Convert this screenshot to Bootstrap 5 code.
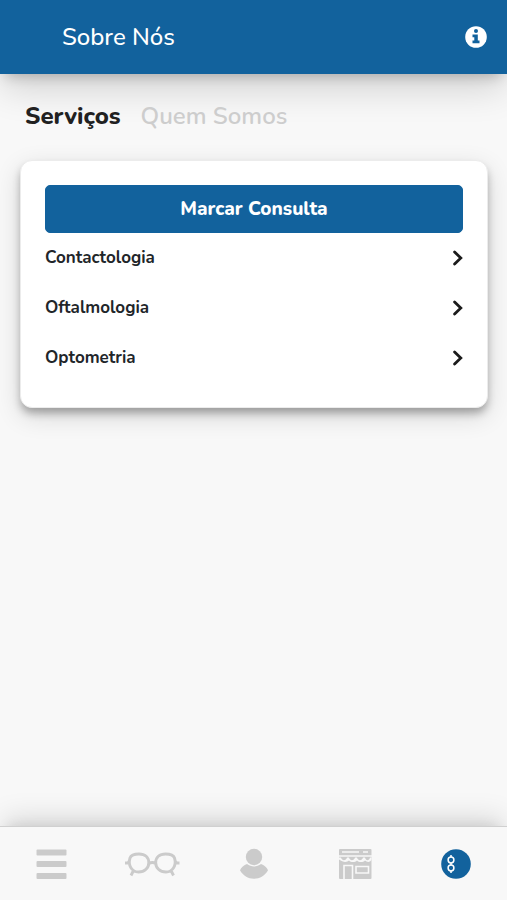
<!DOCTYPE html>
<html lang="pt">
<head>
<meta charset="utf-8">
<meta name="viewport" content="width=device-width, initial-scale=1">
<title>Sobre Nós</title>
<link href="https://cdn.jsdelivr.net/npm/bootstrap@5.3.0/dist/css/bootstrap.min.css" rel="stylesheet">
<style>
:root { --brand: #12629d; --muted-icon: #cbcbcb; }
body { font-family: Nunito, Lato, "Noto Sans", sans-serif; background: #f8f8f8; color: #212529; }
.app-header { background: var(--brand); height: 74px; padding: 0 20px 0 62px; box-shadow: 0 8px 12px -6px rgba(0,0,0,.22), 0 16px 36px -2px rgba(0,0,0,.16); }
.app-title { font-size: 24px; line-height: 32px; font-weight: 500; }
.icon-btn { line-height: 0; }
.tab-bar { padding: 24px 25px 0; gap: 20px; }
.tab-btn { font-size: 24px; line-height: 36px; font-weight: 600; color: #cdcdcd; }
.tab-btn.active { font-weight: 800; color: #212121; }
.service-card { margin: 26px 19px 0 20px; padding: 24px; border-radius: 12px; border: 1px solid #ececec; box-shadow: 0 6px 8px -1px rgba(0,0,0,.3), 0 8px 26px rgba(0,0,0,.14); }
.book-btn { --bs-btn-bg: var(--brand); --bs-btn-border-color: var(--brand); --bs-btn-hover-bg: #0e5386; font-size: 19px; line-height: 30px; font-weight: 800; padding: 8px 12px; border-radius: 5px; }
.service-row { height: 50px; font-size: 17px; line-height: 24px; font-weight: 700; color: #212529; }
.bottom-nav { height: 74px; background: #f8f8f8; border-top: 1px solid #d0d0d0; box-shadow: 0 -8px 12px -8px rgba(0,0,0,.1), 0 -12px 28px -4px rgba(0,0,0,.13); color: var(--muted-icon); }
</style>
<script src="https://cdn.jsdelivr.net/npm/bootstrap@5.3.0/dist/js/bootstrap.bundle.min.js" defer></script>
</head>
<body>
<div class="d-flex flex-column min-vh-100">
  <header class="app-header d-flex align-items-center justify-content-between text-white">
    <h1 class="app-title m-0">Sobre Nós</h1>
    <button type="button" class="icon-btn btn p-0 border-0 text-white" aria-label="Informação">
      <svg width="22" height="22" viewBox="0 0 22 22"><circle cx="11" cy="11" r="10.8" fill="#fff"/><circle cx="11" cy="5" r="2" fill="#12629d"/><path d="M7.500 8.600h5.300v6H14.500v2.600h-7v-2.600h1.800v-3.400H7.500z" fill="#12629d"/></svg>
    </button>
  </header>
  <main class="flex-grow-1">
    <div class="tab-bar d-flex" role="tablist">
      <button type="button" class="tab-btn active bg-transparent border-0 p-0" role="tab" aria-selected="true">Serviços</button>
      <button type="button" class="tab-btn bg-transparent border-0 p-0" role="tab" aria-selected="false">Quem Somos</button>
    </div>
    <section class="service-card bg-white">
      <button type="button" class="book-btn btn btn-primary w-100">Marcar Consulta</button>
      <nav aria-label="Serviços">
        <a href="#contactologia" class="service-row d-flex align-items-center justify-content-between text-decoration-none"><span>Contactologia</span>
          <svg width="10" height="16" viewBox="0 0 10 16" fill="none" stroke="#1b1b1b" stroke-width="2.8" stroke-linecap="round"><path d="M1.600 2 7.800 8l-6.200 6"/></svg></a>
        <a href="#oftalmologia" class="service-row d-flex align-items-center justify-content-between text-decoration-none"><span>Oftalmologia</span>
          <svg width="10" height="16" viewBox="0 0 10 16" fill="none" stroke="#1b1b1b" stroke-width="2.8" stroke-linecap="round"><path d="M1.600 2 7.800 8l-6.200 6"/></svg></a>
        <a href="#optometria" class="service-row d-flex align-items-center justify-content-between text-decoration-none"><span>Optometria</span>
          <svg width="10" height="16" viewBox="0 0 10 16" fill="none" stroke="#1b1b1b" stroke-width="2.8" stroke-linecap="round"><path d="M1.600 2 7.800 8l-6.200 6"/></svg></a>
      </nav>
    </section>
  </main>
  <nav class="bottom-nav sticky-bottom d-flex align-items-center" aria-label="Principal">
    <a href="#menu" class="icon-btn flex-fill text-center text-reset" aria-label="Menu">
      <svg width="56" height="32" viewBox="0 0 56 32" fill="currentColor"><rect x="13.500" y="1.500" width="30" height="6" rx="1"/><rect x="13.500" y="13" width="30" height="6" rx="1"/><rect x="13.500" y="25" width="30" height="6" rx="1"/></svg></a>
    <a href="#oculos" class="icon-btn flex-fill text-center text-reset" aria-label="Óculos">
      <svg width="56" height="32" viewBox="0 0 56 32" fill="none" stroke="currentColor" stroke-width="2.900" stroke-linejoin="round"><path d="M6 10C7 7 10 6 15 6c6 0 9.800 3.500 9.800 8.700 0 5-4 9.300-10.300 9.300C7.500 24 3.800 17 6 10zM50.500 10c-1-3-4-4-9-4-6 0-9.800 3.500-9.800 8.700 0 5 4 9.300 10.300 9.300 7 0 10.700-7 8.500-14zM25 15.500q3.300-2 6.600 0M5.500 12.500 4 15H1M51 12.500l1.500 2.500h3M9.500 22.500 7 27.500M47 22.500l2.500 5"/></svg></a>
    <a href="#perfil" class="icon-btn flex-fill text-center text-reset" aria-label="Perfil">
      <svg width="56" height="32" viewBox="0 0 56 32" fill="currentColor"><path d="M21 16c-3 1-6 3.500-7 6.300 3 5.400 8 8.500 14 8.500s11-3.100 14-8.500c-1-2.800-4-5.300-7-6.300-4 3.200-10 3.200-14 0z"/><circle cx="28" cy="9" r="8.200"/></svg></a>
    <a href="#lojas" class="icon-btn flex-fill text-center text-reset" aria-label="Lojas">
      <svg width="56" height="32" viewBox="0 0 56 32" fill="currentColor"><rect x="12" y="1" width="32.500" height="30" rx="1"/><g fill="none" stroke="#f8f8f8" stroke-width="1.600"><path d="M15 4h17M36 4h5M12 8h33"/><path d="M17 31V17.500h8.500V31M29 18.500h12.500v6.500H29z"/></g><path fill="#f8f8f8" d="M12 9.500h2c1 3.500 5 3.500 6 0h2c1 3.500 5 3.500 6 0h2c1 3.500 5 3.500 6 0h2c1 3.500 4 3.500 5 0h1.500v2c-1 3-4.500 3-6.500 1-2 2-6 2-8 0-2 2-6 2-8 0-2 2-6 2-10-1z"/></svg></a>
    <a href="#sobre" class="icon-btn flex-fill text-center text-reset" aria-label="Sobre nós" aria-current="page">
      <svg width="56" height="32" viewBox="0 0 56 32"><circle cx="28" cy="16" r="14.800" fill="#12629d"/><g fill="none" stroke="#fff" stroke-width="1.500"><circle cx="23" cy="12" r="2.900"/><circle cx="23" cy="20" r="2.900"/><path d="M23 7v2m0 6v2m0 6v2"/></g></svg></a>
  </nav>
</div>
</body>
</html>
